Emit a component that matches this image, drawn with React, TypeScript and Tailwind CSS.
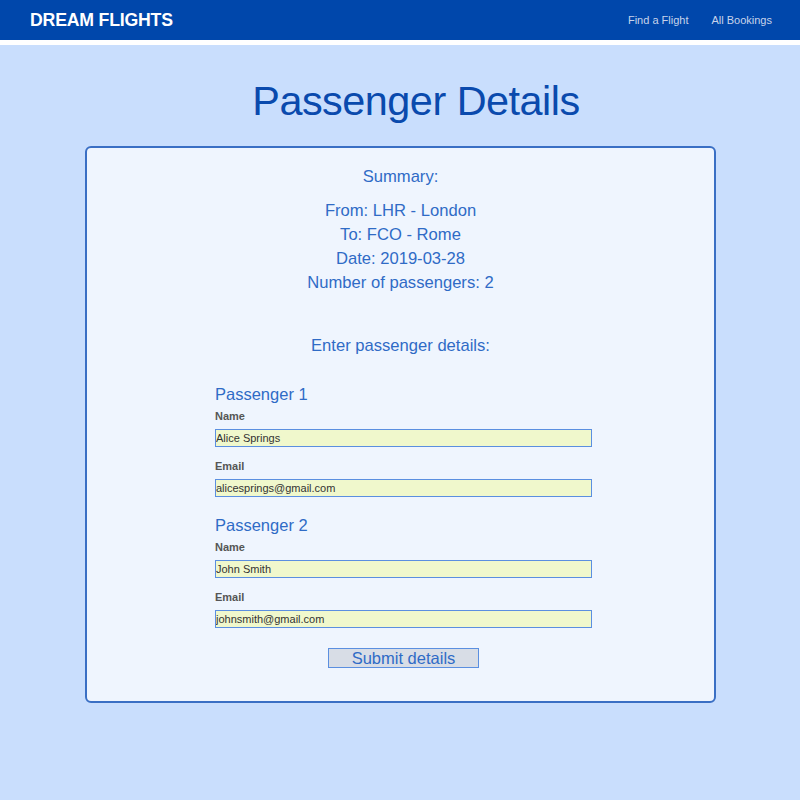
export default function App() {
  const font = { fontFamily: '"Liberation Sans", Arial, sans-serif' };
  const Field = ({ label, value }: { label: string; value: string }) => (
    <div className="flex flex-col">
      <label className="text-[11px] font-bold text-[#555] leading-[13px] mb-[6px]">{label}</label>
      <div className="h-[18px] w-[377px] bg-[#F0F8CC] border border-[#5B8FE0] flex items-center">
        <input
          readOnly
          value={value}
          className="w-full h-full bg-transparent border-0 text-[11px] text-[#333] p-0 leading-[16px] outline-none"
          style={font}
        />
      </div>
    </div>
  );
  return (
    <div className="min-h-[800px] bg-[#C9DEFD]" style={font}>
      <header className="h-[40px] bg-[#0047AB] flex items-center justify-between pl-[30px] pr-[28px]">
        <div className="text-white font-bold text-[17.7px] tracking-[-0.2px]">DREAM FLIGHTS</div>
        <nav className="flex gap-[23px] text-[11px] text-[#c7d3ea]">
          <span>Find a Flight</span>
          <span>All Bookings</span>
        </nav>
      </header>
      <div className="h-[5px] bg-white" />
      <h1 className="text-center text-[41.4px] leading-[52px] text-[#0A4AAD] mt-[30px] mb-[19px] pl-[32px] tracking-[-0.5px]">Passenger Details</h1>
      <div className="mx-[85px] w-[631px] h-[557px] border-2 border-[#3A6FC4] rounded-[6px] bg-[#EFF5FE] text-[#2F6BC6]">
        <div className="text-center text-[16.6px] leading-[24px] pt-[17px]">
          <div>Summary:</div>
          <div className="mt-[10px]">From: LHR - London</div>
          <div>To: FCO - Rome</div>
          <div>Date: 2019-03-28</div>
          <div>Number of passengers: 2</div>
          <div className="mt-[39px]">Enter passenger details:</div>
        </div>
        <div className="ml-[128px] mt-[25px] flex flex-col">
          <div className="text-[16.5px] leading-[22px]">Passenger 1</div>
          <div className="mt-[5px] flex flex-col gap-[13px]">
            <Field label="Name" value="Alice Springs" />
            <Field label="Email" value="alicesprings@gmail.com" />
          </div>
          <div className="text-[16.5px] leading-[22px] mt-[17px]">Passenger 2</div>
          <div className="mt-[5px] flex flex-col gap-[13px]">
            <Field label="Name" value="John Smith" />
            <Field label="Email" value="johnsmith@gmail.com" />
          </div>
          <div className="w-[377px] flex justify-center mt-[20px]">
            <button className="w-[151px] h-[20px] bg-[#D8DDE6] border border-[#5B8FE0] text-[16.5px] leading-[18px] text-[#2F6BC6]" style={font}>
              Submit details
            </button>
          </div>
        </div>
      </div>
    </div>
  );
}
